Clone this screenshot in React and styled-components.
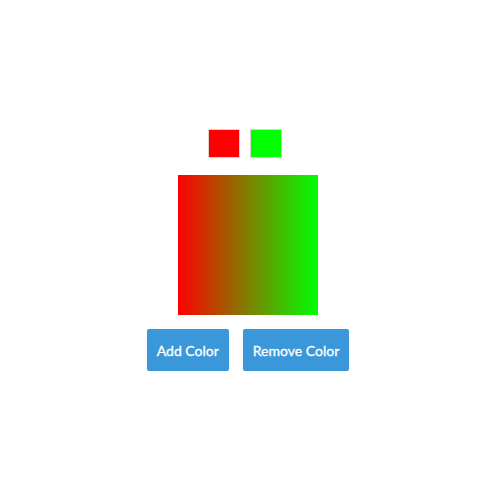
import styled, { createGlobalStyle } from 'styled-components'

const Global = createGlobalStyle`
  html, body {
    margin: 0;
    padding: 0;
    background: #fff;
    font-family: Lato, "Liberation Sans", sans-serif;
  }
`

const Page = styled.div`
  width: 500px;
  height: 500px;
  box-sizing: border-box;
  padding-right: 4px;
  display: flex;
  flex-direction: column;
  align-items: center;
  justify-content: center;
`

const SwatchRow = styled.div`
  display: flex;
  padding-left: 4px;
  margin-bottom: 17px;
`

const Swatch = styled.div`
  width: 30px;
  height: 27px;
  margin-right: 10px;
  background: ${p => p.color};
  border: 1px solid #d6d6d6;
`

const Preview = styled.div`
  width: 140px;
  height: 140px;
  background: linear-gradient(to right, ${p => p.colors.join(', ')});
  margin-bottom: 14px;
`

const Buttons = styled.div`
  display: flex;
  gap: 14px;
`

const Button = styled.button`
  height: 42px;
  padding: 0 10px;
  border: none;
  border-radius: 2px;
  background: #3a97d9;
  color: #fff;
  font-family: Lato, "Liberation Sans", sans-serif;
  font-size: 14px;
  font-weight: 400;
  -webkit-text-stroke: 0.3px #fff;
  cursor: pointer;
`

const colors = ['#ff0000', '#00ff00']

const App = () => {
  return (
    <>
      <Global />
      <Page>
        <SwatchRow>
          {colors.map(c => <Swatch key={c} color={c} />)}
        </SwatchRow>
        <Preview colors={colors} />
        <Buttons>
          <Button>Add Color</Button>
          <Button>Remove Color</Button>
        </Buttons>
      </Page>
    </>
  )
}

export default App
